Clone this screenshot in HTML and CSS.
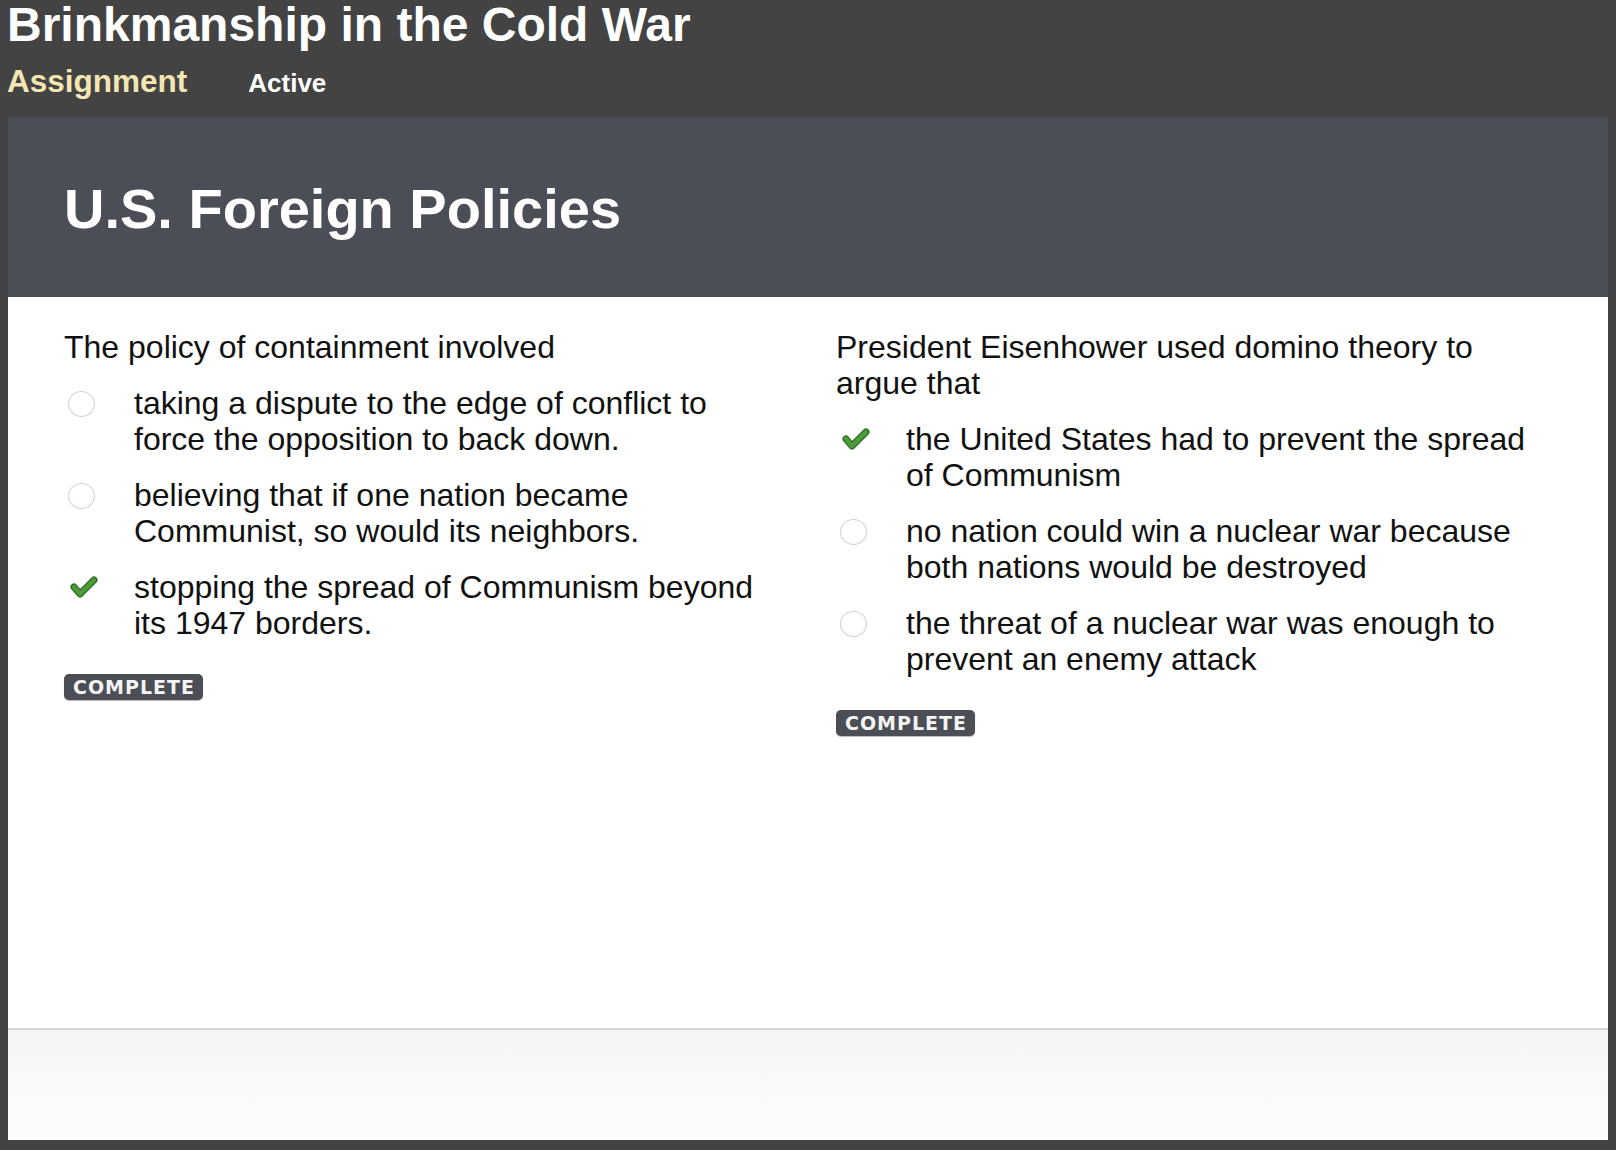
FILE: index.html
```html
<!DOCTYPE html>
<html lang="en">
<head>
<meta charset="utf-8">
<title>Brinkmanship in the Cold War</title>
<link rel="stylesheet" href="styles.css">
</head>
<body>
<div class="top">
  <h1 class="page-title">Brinkmanship in the Cold War</h1>
  <div class="tabs">
    <span class="tab-type">Assignment</span>
    <span class="tab-status">Active</span>
  </div>
</div>
<div class="panel">
  <div class="panel-head">
    <h2 class="panel-title">U.S. Foreign Policies</h2>
  </div>
  <div class="panel-body">
    <div class="question">
      <p class="prompt">The policy of containment involved</p>
      <div class="options">
        <div class="option">
          <span class="mark"><span class="radio"></span></span>
          <span class="opt-text">taking a dispute to the edge of conflict to force the opposition to back down.</span>
        </div>
        <div class="option">
          <span class="mark"><span class="radio"></span></span>
          <span class="opt-text">believing that if one nation became Communist, so would its neighbors.</span>
        </div>
        <div class="option">
          <span class="mark"><svg class="check" width="28" height="24" viewBox="0 0 28 24"><path d="M4 11 L10 18 L24 4" fill="none" stroke="#2d6a22" stroke-width="7" stroke-linecap="round" stroke-linejoin="round"/><path d="M4 11 L10 18 L24 4" fill="none" stroke="#4c9d3a" stroke-width="4.5" stroke-linecap="round" stroke-linejoin="round"/></svg></span>
          <span class="opt-text">stopping the spread of Communism beyond its 1947 borders.</span>
        </div>
      </div>
      <span class="badge">COMPLETE</span>
    </div>
    <div class="question">
      <p class="prompt">President Eisenhower used domino theory to argue that</p>
      <div class="options">
        <div class="option">
          <span class="mark"><svg class="check" width="28" height="24" viewBox="0 0 28 24"><path d="M4 11 L10 18 L24 4" fill="none" stroke="#2d6a22" stroke-width="7" stroke-linecap="round" stroke-linejoin="round"/><path d="M4 11 L10 18 L24 4" fill="none" stroke="#4c9d3a" stroke-width="4.5" stroke-linecap="round" stroke-linejoin="round"/></svg></span>
          <span class="opt-text">the United States had to prevent the spread of Communism</span>
        </div>
        <div class="option">
          <span class="mark"><span class="radio"></span></span>
          <span class="opt-text">no nation could win a nuclear war because both nations would be destroyed</span>
        </div>
        <div class="option">
          <span class="mark"><span class="radio"></span></span>
          <span class="opt-text">the threat of a nuclear war was enough to prevent an enemy attack</span>
        </div>
      </div>
      <span class="badge">COMPLETE</span>
    </div>
  </div>
  <div class="panel-foot"></div>
</div>
</body>
</html>
```
FILE: styles.css
```css
html, body {
  margin: 0;
  padding: 0;
}
body {
  background: #434343;
  font-family: "Liberation Sans", Arial, sans-serif;
  width: 1616px;
  height: 1150px;
  overflow: hidden;
}
.top {
  padding: 1px 0 0 7px;
}
.page-title {
  margin: 0;
  font-size: 48px;
  line-height: 48px;
  font-weight: bold;
  color: #ffffff;
}
.tabs {
  display: flex;
  align-items: baseline;
  margin-top: 12px;
  height: 40px;
  line-height: 40px;
}
.tab-type {
  font-size: 31.5px;
  font-weight: bold;
  color: #f3e6b3;
}
.tab-status {
  margin-left: 61px;
  font-size: 26px;
  font-weight: bold;
  color: #ffffff;
}
.panel {
  margin: 16px 8px 0 8px;
  width: 1600px;
  display: flex;
  flex-direction: column;
}
.panel-head {
  box-sizing: border-box;
  height: 180px;
  padding: 60px 0 0 56px;
  background: #4b4e56;
}
.panel-title {
  margin: 0;
  font-size: 56px;
  line-height: 64px;
  font-weight: bold;
  color: #ffffff;
}
.panel-body {
  box-sizing: border-box;
  height: 731px;
  background: #ffffff;
  padding: 32px 56px 0 56px;
  display: grid;
  grid-template-columns: 716px 716px;
  column-gap: 56px;
  align-items: start;
}
.question {
  display: flex;
  flex-direction: column;
  align-items: flex-start;
}
.prompt {
  margin: 0 0 20px 0;
  font-size: 32px;
  line-height: 36px;
  color: #111111;
}
.options {
  display: flex;
  flex-direction: column;
  gap: 20px;
}
.option {
  display: flex;
  align-items: flex-start;
}
.mark {
  flex: 0 0 70px;
  width: 70px;
  height: 36px;
}
.radio {
  display: block;
  box-sizing: border-box;
  width: 27px;
  height: 26px;
  margin: 6px 0 0 4px;
  border-radius: 50%;
  border: 1px solid #d2d2d2;
  background: radial-gradient(circle at 50% 40%, #ffffff 55%, #f1f1f1 100%);
}
.check {
  display: block;
  margin: 7px 0 0 6px;
}
.opt-text {
  font-size: 32px;
  line-height: 36px;
  color: #111111;
}
.badge {
  margin-top: 33px;
  box-sizing: border-box;
  width: 139px;
  height: 26px;
  border-radius: 5px;
  background: #4c4e55;
  box-shadow: 0 1px 1px #b8b8b8;
  color: #f4f4f4;
  font-family: "DejaVu Sans", Verdana, sans-serif;
  font-weight: bold;
  font-size: 19px;
  line-height: 26px;
  letter-spacing: 1px;
  text-align: center;
  padding-left: 1px;
}
.panel-foot {
  height: 110px;
  border-top: 2px solid #d3d3d3;
  background: linear-gradient(#f5f5f5, #fdfdfd);
}
```
